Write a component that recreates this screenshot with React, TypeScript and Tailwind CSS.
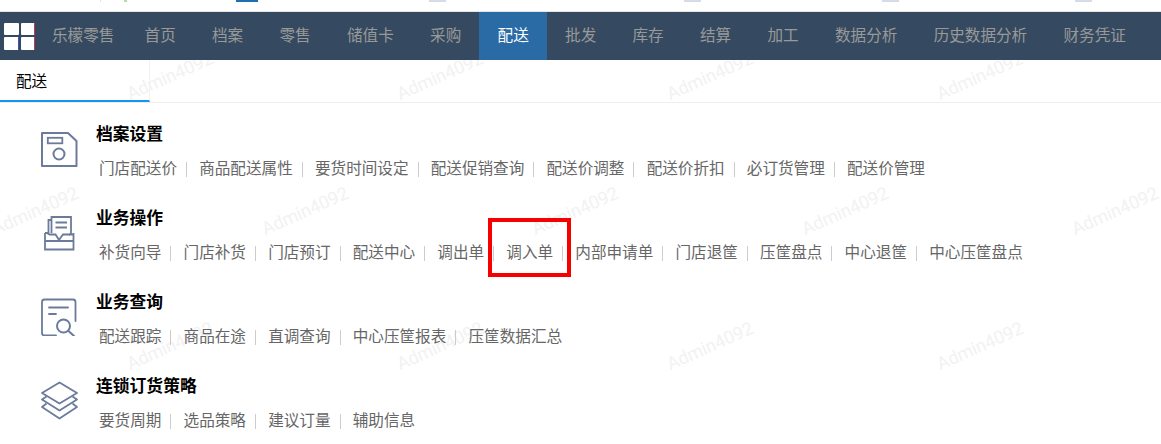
const navItems = ['首页', '档案', '零售', '储值卡', '采购', '配送', '批发', '库存', '结算', '加工', '数据分析', '历史数据分析', '财务凭证'];

const watermarks = [
  'left-[170px] top-[76px]',
  'left-[440px] top-[76px]',
  'left-[710px] top-[76px]',
  'left-[980px] top-[76px]',
  'left-[35px] top-[211px]',
  'left-[305px] top-[211px]',
  'left-[575px] top-[211px]',
  'left-[845px] top-[211px]',
  'left-[1115px] top-[211px]',
  'left-[170px] top-[346px]',
  'left-[440px] top-[346px]',
  'left-[710px] top-[346px]',
  'left-[980px] top-[346px]',
];

// leftovers of the page above, cut off by the top of the shot
const topMarks = [
  'left-[100px] w-[1px] bg-[#e4e4e4]',
  'left-[124px] w-[3px] bg-[#b5dca5]',
  'left-[236px] w-[22px] bg-[#1f6fb5]',
  'left-[429px] w-[17px] bg-[#d5dbe8]',
  'left-[684px] w-[17px] bg-[#d5dbe8]',
  'left-[882px] w-[17px] bg-[#d5dbe8]',
  'left-[1075px] w-[17px] bg-[#d5dbe8]',
];

const stroke = { fill: 'none', stroke: '#6b7b9c', strokeWidth: 1.8 };

function FloppyIcon() {
  return (
    <svg width="40" height="40" viewBox="0 0 40 40" {...stroke}>
      <path d="M2 5H28L36.500 13V38H2Z" strokeWidth="2" strokeLinejoin="round" />
      <rect x="7.8" y="9.8" width="14.5" height="5.5" />
      <circle cx="19" cy="26" r="5.5" strokeWidth="2" />
    </svg>
  );
}

function TrayIcon() {
  return (
    <svg width="40" height="40" viewBox="0 0 40 40" {...stroke}>
      <path d="M8.5 23V8H11" />
      <path d="M11.5 21V5H31V22" />
      <path d="M15.5 10.5H27M15.5 15.5H27" />
      <path d="M5 21V37.5H33.5V21" />
      <path d="M5 21H9M29 22.5H33.5" />
      <path d="M9 22.5H15.5L19 28L23 22.5H30M5 29H33.5" />
    </svg>
  );
}

function QueryIcon() {
  return (
    <svg width="40" height="40" viewBox="0 0 40 40" {...stroke}>
      <path d="M16 39.5H4.5Q2 39.5 2 37V6Q2 3.500 4.500 3.500H33Q35.500 3.500 35.500 6V25" strokeLinecap="round" />
      <path d="M9 11.500H28M9 18H16" strokeLinecap="round" />
      <circle cx="23.500" cy="30" r="6.500" strokeWidth="2" />
      <path d="M28.500 35L34 40" strokeWidth="2" strokeLinecap="round" />
    </svg>
  );
}

function LayersIcon() {
  return (
    <svg width="40" height="40" viewBox="0 0 40 40" {...stroke}>
      <path d="M19.500 2.500L37 13L19.500 23.500L2 13Z" strokeLinejoin="round" />
      <path d="M6.500 16.500L2 19.500L19.500 30.500L37 19.500L32.500 16.500" strokeLinejoin="round" />
      <path d="M6.500 23.500L2 27L19.500 38.500L37 27L32.500 23.500" strokeLinejoin="round" />
    </svg>
  );
}

function Section({ title, links, icon }: { title: string; links: string[]; icon: React.ReactNode }) {
  return (
    <div className="flex h-[84px]">
      <div className="w-[96px] pl-[40px] pt-[6px] shrink-0">{icon}</div>
      <div>
        <h3 className="h-[24px] mt-[1px] text-[16.800px] leading-[24px] font-bold text-black">{title}</h3>
        <div className="flex items-center h-[24px] mt-[10px] pl-[3px]">
          {links.map((l, i) => (
            <div key={l} className="flex items-center">
              <span className="text-[15.600px] leading-[24px] text-[#666] whitespace-nowrap">{l}</span>
              {i < links.length - 1 && <span className="w-[1px] h-[15px] bg-[#ccc] ml-[9px] mr-[12.200px]"></span>}
            </div>
          ))}
        </div>
      </div>
    </div>
  );
}

export default function App() {
  return (
    <div className="relative w-[1161px] h-[444px] overflow-hidden bg-white font-['Liberation_Sans','Noto_Sans_CJK_SC',sans-serif]">
      {topMarks.map(c => (
        <div key={c} className={`absolute top-0 h-[2px] ${c}`}></div>
      ))}

      {/* watermark */}
      {watermarks.map(c => (
        <div key={c} className={`absolute ${c} -translate-x-1/2 -translate-y-1/2 -rotate-[24deg] text-[18px] leading-none text-[#f2f2f2] font-['Roboto',sans-serif] whitespace-nowrap pointer-events-none`}>
          Admin4092
        </div>
      ))}

      <div className="relative h-[12px] border-b border-[#e6e6e6]"></div>

      {/* NAVBAR */}
      <nav className="relative flex items-center h-[48px] bg-[#354a60] text-[15.600px]">
        <div className="grid grid-cols-2 gap-[2px] w-[31px] ml-[4px] shrink-0">
          <span className="h-[12.500px] bg-white rounded-[1px]"></span>
          <span className="h-[12.500px] bg-white rounded-[1px] border-r border-[#c0394a]"></span>
          <span className="h-[12.500px] bg-white rounded-[1px] border-r border-[#3a4fc0]"></span>
          <span className="h-[12.500px] bg-white rounded-[1px] border-r border-[#c0394a]"></span>
        </div>
        <span className="ml-[17px] mr-[12px] text-[#999] whitespace-nowrap">乐檬零售</span>
        {navItems.map(n => (
          <a key={n} className={`flex items-center h-full px-[18.150px] whitespace-nowrap ${n === '配送' ? 'bg-[#2a6ba5] text-white' : 'text-[#999]'}`}>
            {n}
          </a>
        ))}
      </nav>

      {/* tabs */}
      <div className="relative h-[43px] border-b border-[#eee]">
        <div className="w-[150px] h-[42px] pl-[16px] leading-[43px] text-[15.600px] text-black border-r border-[#f2f2f2] border-b-2 border-b-[#1296f0]">配送</div>
      </div>

      <main className="relative pt-[19px]">
        <Section
          title="档案设置"
          icon={<FloppyIcon />}
          links={['门店配送价', '商品配送属性', '要货时间设定', '配送促销查询', '配送价调整', '配送价折扣', '必订货管理', '配送价管理']}
        />
        <Section
          title="业务操作"
          icon={<TrayIcon />}
          links={['补货向导', '门店补货', '门店预订', '配送中心', '调出单', '调入单', '内部申请单', '门店退筐', '压筐盘点', '中心退筐', '中心压筐盘点']}
        />
        <Section
          title="业务查询"
          icon={<QueryIcon />}
          links={['配送跟踪', '商品在途', '直调查询', '中心压筐报表', '压筐数据汇总']}
        />
        <Section
          title="连锁订货策略"
          icon={<LayersIcon />}
          links={['要货周期', '选品策略', '建议订量', '辅助信息']}
        />
      </main>

      {/* red highlight around 调入单 */}
      <div className="absolute left-[488px] top-[218px] w-[83px] h-[59px] border-[4px] border-[#f60000] pointer-events-none"></div>
    </div>
  );
}
